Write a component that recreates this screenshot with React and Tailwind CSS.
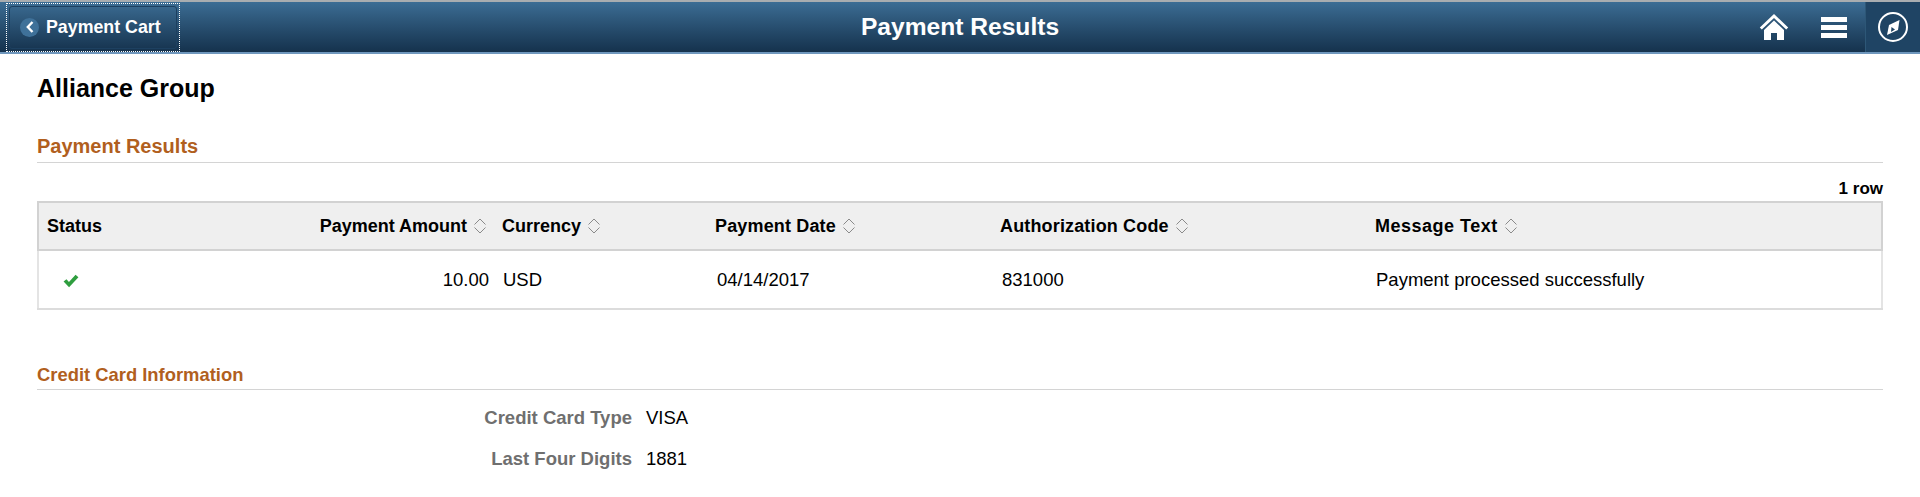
import React from 'react';

const SortIcon = () => (
  <svg width="14" height="16" viewBox="0 0 14 16" fill="none" stroke="#8a8a8a" strokeWidth="1" className="shrink-0">
    <path d="M1.500 6.500 7 1l5.500 5.500" />
    <path d="M1.500 9.500 7 15l5.500-5.500" />
  </svg>
);

const HeaderCell = ({ label, className = '' }) => (
  <th className={`h-full p-0 font-bold text-black ${className}`}>
    <div className="flex items-center gap-[6px]">
      <span>{label}</span>
      <SortIcon />
    </div>
  </th>
);

const SectionTitle = ({ children, className = '' }) => (
  <h2 className={`font-bold text-[#b15f1e] border-b border-[#d4d4d4] ${className}`}>{children}</h2>
);

const App = () => {
  return (
    <div className="w-[1920px] h-[497px] overflow-hidden bg-white text-black font-['Liberation_Sans',Arial,sans-serif]">
      {/* Banner */}
      <div className="h-[54px] flex items-stretch border-t-2 border-t-[#a9adb0] border-b-2 border-b-[#6f97bd] bg-gradient-to-b from-[#3c6d94] to-[#15324d]">
        <div className="w-[510px] flex items-center pl-[6px]">
          <div className="w-[174px] h-[49px] p-[2px] border border-dotted border-white">
            <button className="w-full h-full flex items-center pl-[10px] gap-[7px] rounded-[3px] border border-[#1d4060] text-white text-[17.800px] font-bold">
              <span className="w-[19px] h-[19px] rounded-full bg-[#3f7199] flex items-center justify-center">
                <svg width="10" height="12" viewBox="0 0 10 12" fill="none" stroke="white" strokeWidth="2.400">
                  <path d="M7.500 1 2.800 6l4.700 5" />
                </svg>
              </span>
              Payment Cart
            </button>
          </div>
        </div>
        <div className="w-[900px] flex items-center justify-center text-white text-[24.600px] font-bold">Payment Results</div>
        <div className="flex-1 flex items-stretch justify-end">
          <div className="flex items-center mr-[18px] gap-[32px]">
            <svg width="30" height="28" viewBox="0 0 30 28" fill="white">
              <path d="M15 1 0.800 14.500l2 2L15 5l12.200 11.500 2-2z" />
              <path d="M15 7.500 5 17v10h7v-7h6v7h7V17z" />
            </svg>
            <div className="flex flex-col gap-[3px]">
              <div className="w-[26px] h-[5px] bg-white" />
              <div className="w-[26px] h-[5px] bg-white" />
              <div className="w-[26px] h-[5px] bg-white" />
            </div>
          </div>
          <div className="w-[55px] flex items-center justify-center bg-[#1f4464] border-l border-[#2d5777]">
            <svg width="32" height="32" viewBox="0 0 32 32" fill="none">
              <circle cx="16" cy="16" r="14" stroke="white" strokeWidth="2" />
              <path d="M22.500 9 21 19 10 24l2-10z" fill="white" />
              <path d="M14.500 16 14 21l4-2.500z" fill="#1f4464" />
            </svg>
          </div>
        </div>
      </div>

      {/* Content */}
      <div className="pl-[37px] pr-[37px]">
        <h1 className="mt-[20px] h-[28px] leading-[28px] text-[25px] font-bold">Alliance Group</h1>
        <SectionTitle className="mt-[29px] h-[32px] leading-[31px] text-[20px]">Payment Results</SectionTitle>

        <div className="mt-[14px] h-[24px] leading-[24px] text-right text-[17px] font-bold">1 row</div>

        <table className="w-full table-fixed border-collapse text-[18px] border-x-2 border-b-2 border-x-[#e4e4e4] border-b-[#dcdcdc]">
          <colgroup>
            <col className="w-[453px]" />
            <col className="w-[212px]" />
            <col className="w-[285px]" />
            <col className="w-[375px]" />
            <col />
          </colgroup>
          <thead>
            <tr className="h-[48px] bg-[#efefef] border-2 border-[#d2d2d2]">
              <th className="p-0">
                <div className="flex items-center justify-between pl-[8px] pr-[4px] font-bold">
                  <span>Status</span>
                  <span className="flex items-center gap-[6px]">
                    Payment Amount
                    <SortIcon />
                  </span>
                </div>
              </th>
              <HeaderCell label="Currency" className="pl-[11px]" />
              <HeaderCell label="Payment Date" className="pl-[12px] tracking-[0.15px]" />
              <HeaderCell label="Authorization Code" className="pl-[12px] tracking-[0.15px]" />
              <HeaderCell label="Message Text" className="pl-[12px] tracking-[0.5px]" />
            </tr>
          </thead>
          <tbody>
            <tr className="h-[59px] text-[18.500px]">
              <td className="p-0">
                <div className="flex items-center justify-between pl-[24px] pr-[2px]">
                  <svg width="16" height="14" viewBox="0 0 14 12" className="mt-[3px]">
                    <path d="M0.500 6.500 3 4.500l2.200 2.300L11 0.500l2.500 2.200L5.300 11.500z" fill="#2f9e3f" />
                  </svg>
                  <span>10.00</span>
                </div>
              </td>
              <td className="p-0 pl-[12px]">USD</td>
              <td className="p-0 pl-[14px]">04/14/2017</td>
              <td className="p-0 pl-[14px]">831000</td>
              <td className="p-0 pl-[13px]">Payment processed successfully</td>
            </tr>
          </tbody>
        </table>

        <SectionTitle className="mt-[55px] h-[25px] leading-[20px] text-[18.400px]">Credit Card Information</SectionTitle>

        <dl className="mt-[14px] text-[18.500px]">
          {[
            ['Credit Card Type', 'VISA'],
            ['Last Four Digits', '1881'],
          ].map(([label, value]) => (
            <div key={label} className="h-[41px] flex">
              <dt className="w-[595px] text-right font-bold text-[#6f6f6f]">{label}</dt>
              <dd className="ml-[14px]">{value}</dd>
            </div>
          ))}
        </dl>
      </div>
    </div>
  );
};

export default App;
